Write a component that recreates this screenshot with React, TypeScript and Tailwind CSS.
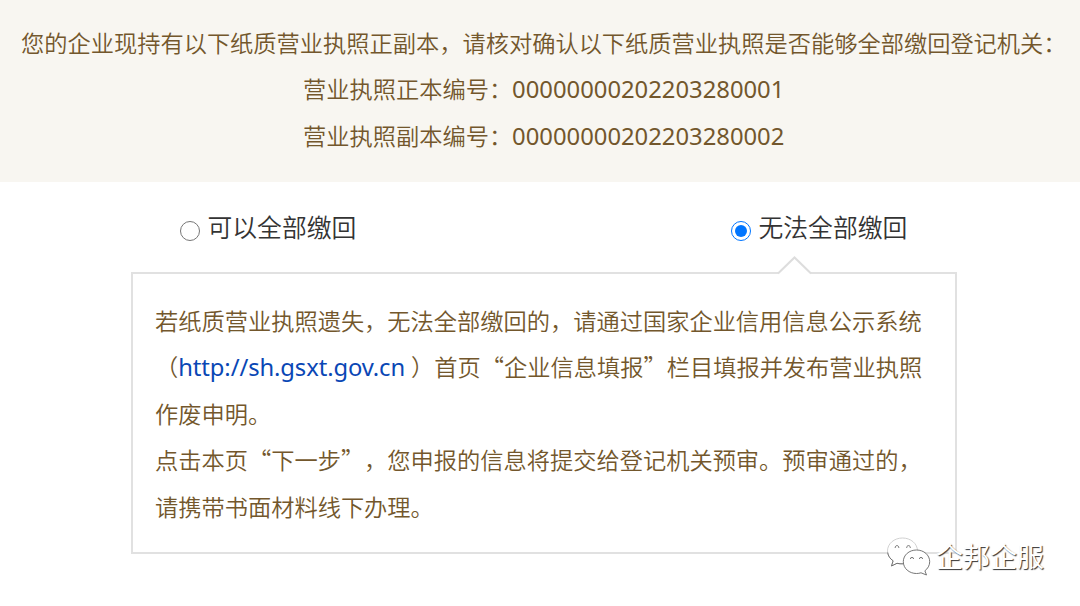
import type { ReactNode } from 'react';

const licenses = [
  { label: '营业执照正本编号：', code: '00000000202203280001' },
  { label: '营业执照副本编号：', code: '00000000202203280002' },
];

function Latin({ children }: { children: ReactNode }) {
  return (
    <span className="font-['Noto_Sans',sans-serif] text-[23.8px] font-normal leading-none">{children}</span>
  );
}

function Radio({ label, checked }: { label: string; checked?: boolean }) {
  return (
    <label className="flex items-start gap-[7.5px] text-[24.8px] leading-9 text-[#333]">
      <span
        className={`mt-[13px] flex size-5 items-center justify-center rounded-full border-[1.5px] bg-white ${
          checked ? 'border-[#0075ff]' : 'border-[#767676]'
        }`}
      >
        {checked && <span className="size-3 rounded-full bg-[#0075ff]" />}
      </span>
      {label}
    </label>
  );
}

function Watermark() {
  return (
    <div className="absolute left-[886px] top-[534px] flex items-center gap-[5px]">
      <svg width="45" height="42" viewBox="0 0 45 42" fill="none" stroke="#666" strokeWidth="0.9">
        <path
          d="M16.500 3C8.200 3 1.500 8.700 1.500 15.900c0 4.200 2 7.500 5.600 9.900L5.500 31l5.500-2.700c1.500.4 3.500.6 5.500.6 8.300 0 15-5.800 15-13S24.800 3 16.500 3Z"
          fill="white"
          stroke="#ccc"
        />
        <path d="M1.700 17.500c.4 3.400 2.400 6.300 5.400 8.300L5.500 31l5.500-2.700c2 .5 4 .6 6 .5" />
        <path
          d="M30.500 15c-7.300 0-13.200 5-13.200 11.700s5.900 11.800 13.200 11.800c1.600 0 3.100-.2 4.500-.7l5.500 2.200-1.600-4.200c2.900-2.200 4.800-5.400 4.800-9.100C43.700 20 37.800 15 30.500 15Z"
          fill="white"
        />
        <path d="M9.300 13a1.800 1.800 0 1 1 3.400 0M20.800 13a1.800 1.800 0 1 1 3.400 0M24.400 24a1.600 1.600 0 1 1 3.200 0M33.400 24a1.600 1.600 0 1 1 3.200 0" />
      </svg>
      <span className="text-[27px] font-normal leading-[44px] text-white [text-shadow:1px_1px_1px_#333]">
        企邦企服
      </span>
    </div>
  );
}

export default function App() {
  return (
    <div
      lang="zh-CN"
      className="relative h-[606px] w-[1080px] overflow-hidden bg-white font-['Noto_Sans_CJK_SC',sans-serif] font-[350] [text-spacing-trim:space-all]"
    >
      <div className="h-[182px] bg-[#f8f6f1] pl-[21px] pt-[19px] text-[23.24px] leading-[46.4px] text-[#73572c]">
        <p className="whitespace-nowrap">
          您的企业现持有以下纸质营业执照正副本，请核对确认以下纸质营业执照是否能够全部缴回登记机关：
        </p>
        {licenses.map((item) => (
          <p key={item.code} className="pl-[282px]">
            {item.label}
            <Latin>{item.code}</Latin>
          </p>
        ))}
      </div>

      <div className="flex h-[90px] items-start pl-[180px] pt-[26px]">
        <div className="w-[551px]">
          <Radio label="可以全部缴回" />
        </div>
        <Radio label="无法全部缴回" checked />
      </div>

      <div className="relative ml-[131px] h-[282px] w-[826px] border-2 border-[#e1e1e1] px-[22px] pt-[23px] text-[23.24px] leading-[46.4px] text-[#73572c]">
        <svg className="absolute left-[644px] top-[-18px]" width="36" height="19" viewBox="0 0 36 19">
          <path d="M1 18L17.500 1.500L34 18V19H1Z" fill="white" />
          <path d="M1 17.500L17.500 1.500L34 17.500" fill="none" stroke="#ddd" strokeWidth="2" />
        </svg>
        <p className="whitespace-nowrap">
          若纸质营业执照遗失，无法全部缴回的，请通过国家企业信用信息公示系统
          <br />
          （<a className="tracking-[-0.1px] text-[#0a47b5]"><Latin>http://sh.gsxt.gov.cn </Latin></a>）首页“企业信息填报”栏目填报并发布营业执照
          <br />
          作废申明。
        </p>
        <p className="whitespace-nowrap">
          点击本页“下一步”，您申报的信息将提交给登记机关预审。预审通过的，
          <br />
          请携带书面材料线下办理。
        </p>
      </div>

      <Watermark />
    </div>
  );
}
